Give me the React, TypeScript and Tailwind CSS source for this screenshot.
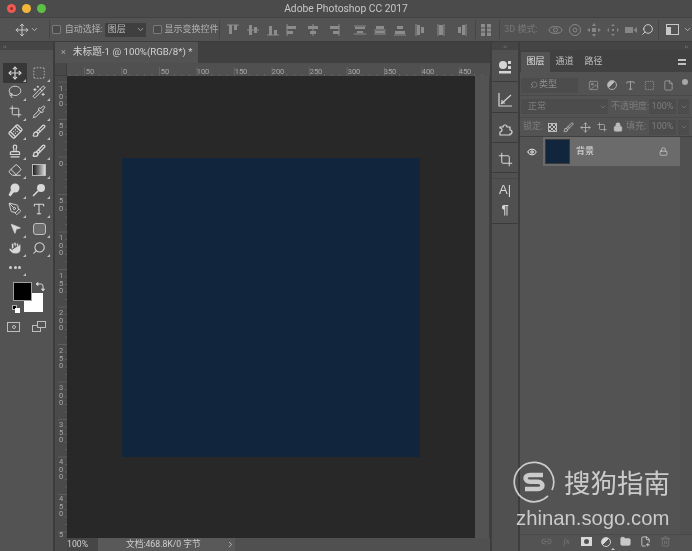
import React from "react";
import { Move, ChevronDown, BoxSelect, Lasso, Wand2, Crop, Pipette, Bandage, Brush, Stamp, Eraser, Hand, Search, PenTool, Type, MousePointer2, Eye, Lock, Link2, Trash2, Folder, FilePlus2, ChevronRight, Image, SquareDashed, File } from "lucide-react";

const font = "font-['Roboto','Noto_Sans_CJK_SC',sans-serif]";

function Corner() {
  return <span className="absolute right-[1px] bottom-[1px] w-0 h-0 border-l-[3px] border-l-transparent border-b-[3px] border-b-[#bbbbbb]" />;
}

function Tool({ children, active }: { children: React.ReactNode; active?: boolean }) {
  return (
    <div className={`relative w-[24px] h-[19.5px] flex items-center justify-center text-[#d8d8d8] ${active ? "bg-[#373737]" : ""}`}>
      {children}
      <Corner />
    </div>
  );
}

function HRuler() {
  const ticks: number[] = [];
  for (let x = 2.5; x < 420; x += 7.5) ticks.push(x);
  const labels = [["50", 90], ["0", 125], ["50", 165], ["100", 203], ["150", 241], ["200", 278], ["250", 316], ["300", 354], ["350", 390], ["400", 428], ["450", 465]] as [string, number][];
  return (
    <svg width="422" height="13" className="block">
      {ticks.map((x, i) => <line key={i} x1={x} x2={x} y1={(i - 2) % 5 === 0 ? 4 : 11} y2={13} stroke="#6e6e6e" strokeWidth="0.6" />)}
      {labels.map(([t, x]) => <text key={x} x={x - 67} y={10.5} textAnchor="middle" fontSize="7.5" fill="#a8a8a8" fontFamily="Roboto">{t}</text>)}
    </svg>
  );
}

function VRuler() {
  const ticks: number[] = [];
  for (let y = 6; y < 462; y += 7.5) ticks.push(y);
  const labels = [["100", 91], ["50", 128], ["0", 166], ["50", 203], ["100", 240], ["150", 278], ["200", 315], ["250", 353], ["300", 390], ["350", 427], ["400", 464], ["450", 501], ["5", 537]] as [string, number][];
  return (
    <svg width="12" height="462" className="block">
      {ticks.map((y, i) => <line key={i} y1={y} y2={y} x1={i % 5 === 0 ? 3 : 10} x2={12} stroke="#6a6a6a" strokeWidth="0.6" />)}
      {labels.map(([t, y]) =>
        t.split("").map((c, i) => (
          <text key={`${y}-${i}`} x={6} y={y - 76 + i * 7.5} textAnchor="middle" fontSize="7.5" fill="#a8a8a8" fontFamily="Roboto">{c}</text>
        ))
      )}
    </svg>
  );
}

function AlignIcon({ kind }: { kind: string }) {
  const c = "#8c8c8c";
  const shapes: Record<string, React.ReactNode> = {
    top: <><path d="M1 2h12" stroke={c} /><rect x="3" y="2" width="3" height="9" fill={c} /><rect x="8" y="2" width="3" height="5" fill={c} /></>,
    vmid: <><path d="M1 7h12" stroke={c} /><rect x="3" y="2" width="3" height="10" fill={c} /><rect x="8" y="4" width="3" height="6" fill={c} /></>,
    bot: <><path d="M1 12h12" stroke={c} /><rect x="3" y="3" width="3" height="9" fill={c} /><rect x="8" y="7" width="3" height="5" fill={c} /></>,
    left: <><path d="M2 1v12" stroke={c} /><rect x="2" y="3" width="9" height="3" fill={c} /><rect x="2" y="8" width="6" height="3" fill={c} /></>,
    hmid: <><path d="M7 1v12" stroke={c} /><rect x="2" y="3" width="10" height="3" fill={c} /><rect x="4" y="8" width="6" height="3" fill={c} /></>,
    right: <><path d="M12 1v12" stroke={c} /><rect x="3" y="3" width="9" height="3" fill={c} /><rect x="6" y="8" width="6" height="3" fill={c} /></>,
    d1: <><path d="M1 3h12M1 11h12" stroke={c} /><rect x="2" y="4" width="10" height="2" fill={c} /><rect x="4" y="8" width="6" height="2" fill={c} /></>,
    d2: <><path d="M1 7h12M1 11h12" stroke={c} /><rect x="3" y="3" width="8" height="3" fill={c} /><rect x="2" y="8" width="10" height="2" fill={c} /></>,
    d3: <><path d="M1 12h12" stroke={c} /><rect x="4" y="3" width="6" height="3" fill={c} /><rect x="2" y="8" width="10" height="3" fill={c} /></>,
    d4: <><path d="M3 1v12" stroke={c} /><rect x="4" y="2" width="3" height="10" fill={c} /><rect x="8" y="4" width="3" height="6" fill={c} /></>,
    d5: <><path d="M4 1v12M10 1v12" stroke={c} /><rect x="5" y="2" width="4" height="10" fill={c} /></>,
    d6: <><path d="M11 1v12" stroke={c} /><rect x="7" y="2" width="3" height="10" fill={c} /><rect x="3" y="4" width="3" height="6" fill={c} /></>,
    dist: <><rect x="2" y="1" width="4" height="12" fill={c} /><rect x="8" y="1" width="4" height="12" fill={c} /><path d="M1 5h12M1 9h12" stroke="#535353" /></>,
  };
  return <svg width="14" height="14" viewBox="0 0 14 14" className="shrink-0">{shapes[kind]}</svg>;
}

function Check() {
  return <span className="w-[9px] h-[9px] rounded-[1px] border border-[#7a7a7a] bg-[#4a4a4a] shrink-0" />;
}

function Sep() {
  return <span className="block w-px h-[19px] bg-[#464646] shrink-0" />;
}

function OptionsBar() {
  return (
    <div className="h-[25px] bg-[#535353] border-t border-[#414141] border-b border-b-[#3c3c3c] flex items-center text-[9px] text-[#b0b0b0] shrink-0">
      <div className="w-[49px] pl-[15px] flex items-center gap-[1px] text-[#d0d0d0]">
        <Move size={14} strokeWidth={1.6} />
        <ChevronDown size={9} />
      </div>
      <Sep />
      <div className="ml-[2px] flex items-center gap-[4px] w-[50px]"><Check /><span className="whitespace-nowrap">自动选择:</span></div>
      <div className="ml-[3px] w-[41px] h-[14px] bg-[#3f3f3f] flex items-center justify-between pl-[3px] pr-[1px] text-[#bcbcbc]">
        <span>图层</span><ChevronDown size={9} />
      </div>
      <div className="ml-[7px] flex items-center gap-[3px] w-[67px]"><Check /><span className="whitespace-nowrap">显示变换控件</span></div>
      <Sep />
      <div className="ml-[6px] flex items-center gap-[6px]"><AlignIcon kind="top" /><AlignIcon kind="vmid" /><AlignIcon kind="bot" /></div>
      <div className="ml-[5px] flex items-center gap-[7px]"><AlignIcon kind="left" /><AlignIcon kind="hmid" /><AlignIcon kind="right" /></div>
      <div className="ml-[12px] flex items-center gap-[6px]"><AlignIcon kind="d1" /><AlignIcon kind="d2" /><AlignIcon kind="d3" /></div>
      <div className="ml-[6px] flex items-center gap-[7px]"><AlignIcon kind="d4" /><AlignIcon kind="d5" /><AlignIcon kind="d6" /></div>
      <span className="ml-[6px]"><Sep /></span>
      <div className="ml-[3px]"><AlignIcon kind="dist" /></div>
      <span className="ml-[6px]"><Sep /></span>
      <span className="ml-[4px] w-[44px] text-[#777777] whitespace-nowrap">3D 模式:</span>
      <div className="flex items-center gap-[5px] text-[#868686]">
        <svg width="15" height="14" viewBox="0 0 15 14" fill="none" stroke="currentColor"><ellipse cx="7.5" cy="7" rx="6.5" ry="3.5" /><circle cx="7.5" cy="7" r="2" /></svg>
        <svg width="14" height="14" viewBox="0 0 14 14" fill="none" stroke="currentColor"><circle cx="7" cy="7" r="5.5" /><circle cx="7" cy="7" r="2" /></svg>
        <svg width="14" height="14" viewBox="0 0 14 14" fill="currentColor"><path d="M7 0l2 3H5zM7 14l-2-3h4zM0 7l3-2v4zM14 7l-3 2V5z" /><rect x="5" y="5" width="4" height="4" /></svg>
        <svg width="14" height="14" viewBox="0 0 14 14" fill="currentColor"><path d="M7 1l2 2H5zM7 13l-2-2h4zM1 7l2-2v4zM13 7l-2 2V5z" /><rect x="6" y="6" width="2" height="2" /></svg>
        <svg width="12" height="8" viewBox="0 0 12 8" fill="currentColor"><rect y="1" width="8" height="6" /><path d="M8.5 4L12 1v6z" /></svg>
      </div>
      <span className="ml-[4px] text-[#dcdcdc]"><Search size={13} strokeWidth={1.6} className="-scale-x-100" /></span>
      <span className="ml-[4px]"><Sep /></span>
      <div className="ml-[7px] flex items-center gap-[4px] text-[#c8c8c8]">
        <svg width="13" height="11" viewBox="0 0 13 11" fill="none" stroke="currentColor"><rect x="0.5" y="0.5" width="12" height="10" /><rect x="1" y="3" width="4" height="7" fill="currentColor" stroke="none" /></svg>
        <ChevronDown size={9} />
      </div>
    </div>
  );
}

function ToolBar() {
  return (
    <div className="w-[53px] shrink-0 flex flex-col bg-[#535353] relative">
      <div className="h-[8px] bg-[#454545] flex items-center pl-[3px] text-[6px] leading-none text-[#8a8a8a]">››</div>
      <div className="h-[13px]" />
      <div className="grid grid-cols-[24px_24px] gap-x-0 pl-[3px]">
        <Tool active><Move size={14} strokeWidth={2} /></Tool>
        <Tool><BoxSelect size={14} strokeWidth={1.3} /></Tool>
        <Tool><Lasso size={14} strokeWidth={1.5} /></Tool>
        <Tool><Wand2 size={14} strokeWidth={1.7} /></Tool>
        <Tool><Crop size={13} strokeWidth={1.7} /></Tool>
        <Tool><Pipette size={14} strokeWidth={1.7} /></Tool>
        <Tool><Bandage size={15} strokeWidth={2} className="-rotate-45" /></Tool>
        <Tool><Brush size={14} strokeWidth={2} /></Tool>
        <Tool><Stamp size={14} strokeWidth={2} /></Tool>
        <Tool><Brush size={14} strokeWidth={2.2} /></Tool>
        <Tool><Eraser size={14} strokeWidth={1.7} /></Tool>
        <Tool><span className="w-[14px] h-[12px] border border-[#bbbbbb] bg-gradient-to-r from-[#222222] to-[#dddddd]" /></Tool>
        <Tool><svg width="14" height="14" viewBox="0 0 14 14" fill="currentColor"><circle cx="7" cy="5" r="4.5" /><path d="M3 7L0.5 12l2 1.5L6 9z" /></svg></Tool>
        <Tool><svg width="14" height="14" viewBox="0 0 14 14" fill="currentColor"><circle cx="9" cy="5" r="4" /><path d="M6 8l-5 5" stroke="currentColor" strokeWidth="1.6" /></svg></Tool>
        <Tool><PenTool size={14} strokeWidth={1.6} /></Tool>
        <Tool><Type size={14} strokeWidth={1.8} /></Tool>
        <Tool><MousePointer2 size={13} fill="currentColor" strokeWidth={1} /></Tool>
        <Tool><span className="w-[13px] h-[12px] rounded-[3px] border border-[#c0c0c0] bg-[#6d6d6d]" /></Tool>
        <Tool><Hand size={14} fill="currentColor" stroke="#535353" strokeWidth={1.2} /></Tool>
        <Tool><Search size={14} strokeWidth={1.8} className="-scale-x-100" /></Tool>
      </div>
      <div className="ml-[3px] w-[24px] h-[19px] relative flex items-center justify-center gap-[1.5px]">
        <span className="w-[3px] h-[3px] rounded-full bg-[#d0d0d0]" />
        <span className="w-[3px] h-[3px] rounded-full bg-[#d0d0d0]" />
        <span className="w-[3px] h-[3px] rounded-full bg-[#d0d0d0]" />
        <Corner />
      </div>
      <div className="relative h-[35px] mt-[3px]">
        <div className="absolute left-[24px] top-[13px] w-[19px] h-[19px] bg-white" />
        <div className="absolute left-[13px] top-[2px] w-[19px] h-[19px] bg-black border border-[#a0a0a0]" />
        <svg className="absolute left-[36px] top-[2px] text-[#cfcfcf]" width="9" height="9" viewBox="0 0 9 9" fill="none" stroke="currentColor"><path d="M1 2h4a2 2 0 0 1 2 2v4" /><path d="M0 2l2-1.5v3zM7 9L5.5 7h3z" fill="currentColor" /></svg>
        <span className="absolute left-[12px] top-[25px] w-[5px] h-[5px] bg-black border border-[#b0b0b0]" />
        <span className="absolute left-[15px] top-[28px] w-[5px] h-[5px] bg-white" />
      </div>
      <div className="mt-[6px] flex items-center pl-[7px] text-[#bdbdbd]">
        <span className="w-[13px] h-[10px] border border-[#bdbdbd] flex items-center justify-center"><span className="w-[4px] h-[4px] rounded-full border border-[#bdbdbd]" /></span>
        <span className="relative ml-[12px] w-[14px] h-[11px]">
          <span className="absolute left-0 bottom-0 w-[9px] h-[7px] border border-[#bdbdbd]" />
          <span className="absolute right-0 top-0 w-[9px] h-[7px] border border-[#bdbdbd] bg-[#535353]" />
        </span>
      </div>
    </div>
  );
}

function DockCell({ children, h }: { children: React.ReactNode; h: string }) {
  return <div className={`${h} pt-[4px] flex items-center justify-center border-b border-[#3b3b3b] text-[#d6d6d6]`}>{children}</div>;
}

function Dock() {
  return (
    <div className="w-[28px] shrink-0 ml-[1px] flex flex-col bg-[#505050] border-x border-[#3e3e3e]">
      <div className="h-[8px] bg-[#454545] flex justify-center items-center text-[6px] leading-none text-[#8a8a8a]">‹‹</div>
      <DockCell h="h-[32px]">
        <svg width="14" height="16" viewBox="0 0 14 16" fill="currentColor"><circle cx="5" cy="5" r="4" /><rect x="10" y="1" width="3" height="3" /><rect x="10" y="6" width="3" height="3" /><rect x="1" y="11" width="12" height="2.5" /></svg>
      </DockCell>
      <DockCell h="h-[31px]">
        <svg width="15" height="15" viewBox="0 0 15 15" fill="none" stroke="currentColor" strokeWidth="1.2"><path d="M1 1v13h13" /><path d="M3 12L13 3" /><path d="M4 8v3h3" /></svg>
      </DockCell>
      <DockCell h="h-[30px]">
        <svg width="15" height="15" viewBox="0 0 15 15" fill="none" stroke="currentColor" strokeWidth="1.2"><path d="M2 5h3a2 2 0 1 1 4 0h3v3a2 2 0 1 1 0 4v1H2v-3a2 2 0 1 0 0-4z" /></svg>
      </DockCell>
      <DockCell h="h-[30px]"><Crop size={15} strokeWidth={1.6} /></DockCell>
      <div className="h-[6px] border-b border-[#474747]" />
      <div className="h-[45px] pt-[3px] flex flex-col items-center gap-[5px] text-[#d6d6d6] border-b border-[#3b3b3b]">
        <span className="text-[13px] leading-[16px] font-['Liberation_Sans',sans-serif]">A|</span>
        <span className="text-[13px] leading-[14px] font-bold font-['Liberation_Sans',sans-serif]">¶</span>
      </div>
      <div className="flex-1" />
    </div>
  );
}

function LayersPanel() {
  return (
    <div className="flex-1 ml-[1px] flex flex-col bg-[#535353] min-w-0 text-[9px]">
      <div className="h-[8px] bg-[#454545] flex justify-end items-center pr-[4px] text-[6px] leading-none text-[#8a8a8a]">››</div>
      <div className="h-[22px] pt-[2px] pl-[1px] bg-[#414141] flex items-center text-[#bdbdbd] pr-[3px]">
        <div className="w-[29px] h-full bg-[#535353] flex items-center justify-center text-[#e0e0e0]">图层</div>
        <div className="w-[29px] text-center">通道</div>
        <div className="w-[29px] text-center">路径</div>
        <div className="flex-1 flex justify-end pr-[3px]">
          <span className="w-[8px] h-[6px] border-y-2 border-[#c0c0c0]" />
        </div>
      </div>
      <div className="h-[24px] pt-[3px] flex items-center border-b border-[#494949]">
        <div className="ml-[1px] w-[57px] h-[15px] bg-[#4c4c4c] flex items-center pl-[9px] gap-[1px] text-[#8e8e8e]">
          <Search size={8} className="-scale-x-100" />
          <span>类型</span>
        </div>
        <div className="ml-[10px] flex items-center gap-[8px] text-[#a8a8a8]">
          <Image size={11} strokeWidth={1.4} />
          <span className="w-[10px] h-[10px] rounded-full bg-gradient-to-br from-[#bbbbbb] from-50% to-[#555555] to-50% border border-[#aaaaaa]" />
          <Type size={11} strokeWidth={2} />
          <SquareDashed size={11} strokeWidth={1.5} />
          <File size={11} strokeWidth={1.6} />
        </div>
        <span className="ml-[8px] w-[6px] h-[6px] rounded-full bg-[#a8a8a8] -translate-y-[3px]" />
      </div>
      <div className="h-[22px] flex items-center border-b border-[#494949] text-[#7d7d7d]">
        <div className="ml-[1px] w-[87px] h-[15px] bg-[#4c4c4c] flex items-center justify-between pl-[7px] pr-[1px]">
          <span>正常</span><ChevronDown size={8} />
        </div>
        <span className="ml-[3px] w-[38px] whitespace-nowrap">不透明度:</span>
        <span className="w-[27px] h-[15px] bg-[#4c4c4c] flex items-center justify-center">100%</span>
        <span className="ml-[2px] w-[11px] h-[15px] bg-[#4c4c4c] flex items-center justify-center"><ChevronDown size={8} /></span>
      </div>
      <div className="h-[19px] flex items-center border-b border-[#3f3f3f] text-[#7d7d7d]">
        <span className="ml-[3px] w-[25px] whitespace-nowrap">锁定:</span>
        <div className="flex items-center gap-[6px] text-[#bdbdbd] w-[78px]">
          <span className="w-[9px] h-[9px] border border-[#bdbdbd] bg-[repeating-conic-gradient(#bdbdbd_0_25%,#535353_0_50%)] bg-[length:4px_4px]" />
          <Brush size={11} strokeWidth={2} />
          <Move size={11} strokeWidth={1.8} />
          <Crop size={10} strokeWidth={1.6} />
          <Lock size={10} fill="currentColor" strokeWidth={1.6} />
        </div>
        <span className="w-[23px] whitespace-nowrap">填充:</span>
        <span className="w-[27px] h-[15px] bg-[#4c4c4c] flex items-center justify-center">100%</span>
        <span className="ml-[2px] w-[11px] h-[15px] bg-[#4c4c4c] flex items-center justify-center"><ChevronDown size={8} /></span>
      </div>
      <div className="flex-1 flex min-h-0">
        <div className="flex-1 min-w-0">
          <div className="h-[29px] flex items-center bg-[#6b6b6b]">
            <div className="w-[23px] h-full flex items-center justify-center bg-[#535353] text-[#e8e8e8]"><Eye size={10} strokeWidth={2.4} /></div>
            <div className="ml-[2px] w-[25px] h-[25px] bg-[#11253d] border border-[#3a3a3a]" />
            <span className="ml-[6px] text-[#e0e0e0]">背景</span>
            <Lock size={9} className="ml-auto mr-[12px] text-[#e0e0e0]" strokeWidth={1.6} />
          </div>
        </div>
        <div className="w-[12px] bg-[#505050]" />
      </div>
      <div className="h-[17px] pb-[3px] relative flex items-center justify-end pr-[21px] gap-[9px] border-t border-[#494949]">
        <Link2 size={11} className="text-[#777777]" />
        <span className="w-[11px] text-center italic text-[#777777] font-['Liberation_Serif',serif]">fx</span>
        <span className="w-[11px] h-[9px] bg-[#d8d8d8] flex items-center justify-center"><span className="w-[5px] h-[5px] rounded-full bg-[#535353]" /></span>
        <span className="w-[10px] h-[10px] rounded-full bg-gradient-to-br from-[#d8d8d8] from-50% to-[#555555] to-50% border border-[#cfcfcf]" />
        <Folder size={11} fill="#c8c8c8" className="text-[#c8c8c8]" />
        <FilePlus2 size={11} className="text-[#c8c8c8]" />
        <Trash2 size={11} className="text-[#777777]" />
        <span className="absolute left-[91px] bottom-[1px] w-0 h-0 border-x-[2px] border-x-transparent border-b-[2px] border-b-[#cccccc]" />
      </div>
    </div>
  );
}

function Center() {
  return (
    <div className="w-[435px] ml-[2px] shrink-0 flex flex-col bg-[#3f3f3f] min-h-0">
      <div className="h-[21px] flex bg-[#404040] shrink-0">
        <div className="w-[143px] bg-[#535353] flex items-center text-[9.7px] text-[#d2d2d2] whitespace-nowrap">
          <span className="ml-[6px] mr-[7px] text-[#a8a8a8] text-[9px]">×</span>
          <span>未标题-1 @ 100%(RGB/8*) *</span>
        </div>
      </div>
      <div className="flex-1 flex min-h-0">
        <div className="flex-1 flex flex-col min-w-0">
          <div className="flex shrink-0 h-[13px]">
            <div className="w-[12px] bg-[#484848] border-r border-b border-[#3d3d3d]" />
            <div className="flex-1 bg-[#505050] overflow-hidden"><HRuler /></div>
          </div>
          <div className="flex-1 flex min-h-0">
            <div className="w-[12px] bg-[#4a4a4a] overflow-hidden"><VRuler /></div>
            <div className="w-[408px] bg-[#282828] flex items-center justify-center">
              <div className="w-[298px] h-[299px] bg-[#11253d]" />
            </div>
            <div className="w-[15px] bg-[#535353] border-r border-[#404040]" />
          </div>
          <div className="h-[13px] flex shrink-0 text-[8.7px] text-[#cfcfcf] items-center bg-[#505050]">
            <div className="w-[12px] h-full bg-[#4a4a4a]" />
            <div className="w-[31px] h-full bg-[#464646] flex items-center justify-start">100%</div>
            <div className="w-[137px] h-full bg-[#595959] flex items-center pl-[28px] justify-between">
              <span className="whitespace-nowrap">文档:468.8K/0 字节</span>
              <ChevronRight size={9} />
            </div>
          </div>
        </div>
      </div>
    </div>
  );
}

function Watermark() {
  return (
    <div className="absolute left-[513px] top-[461px] w-[172px] text-[#cbcbcb]">
      <div className="flex items-center">
        <svg width="42" height="42" viewBox="0 0 42 42" fill="none">
          <path d="M31 38A19.7 19.7 0 1 1 39 29" stroke="#cbcbcb" strokeWidth="1.7" />
          <path d="M35 35l-4 3" stroke="#cbcbcb" strokeWidth="1.7" />
          <path d="M30 14H17C11 14 11 20.5 17 20.8H25C31 21 31 28 25 28H12" stroke="#cbcbcb" strokeWidth="4.4" />
        </svg>
        <span className="ml-[9px] text-[26.5px] leading-none whitespace-nowrap font-['Noto_Sans_CJK_SC',sans-serif]">搜狗指南</span>
      </div>
      <div className="mt-[2px] ml-[3px] text-[20.3px] leading-[26px] whitespace-nowrap font-['Liberation_Sans',sans-serif]">zhinan.sogo.com</div>
    </div>
  );
}

export default function App() {
  return (
    <div className={`relative w-[692px] h-[551px] overflow-hidden flex flex-col bg-[#3c3c3c] ${font} blur-[0.45px]`}>
      <div className="h-[17px] shrink-0 bg-[#4b4b4b] flex items-center relative">
        <div className="flex items-center gap-[6px] pl-[7px]">
          <span className="w-[9px] h-[9px] rounded-full bg-[#ee5a52] flex items-center justify-center"><span className="w-[3px] h-[3px] rounded-full bg-[#9c2a2a]" /></span>
          <span className="w-[9px] h-[9px] rounded-full bg-[#f3b63a]" />
          <span className="w-[9px] h-[9px] rounded-full bg-[#5cc043]" />
        </div>
        <span className="absolute left-0 right-0 text-center text-[10.3px] text-[#c6c6c6]">Adobe Photoshop CC 2017</span>
      </div>
      <OptionsBar />
      <div className="flex-1 flex min-h-0">
        <ToolBar />
        <Center />
        <Dock />
        <LayersPanel />
      </div>
      <Watermark />
    </div>
  );
}
